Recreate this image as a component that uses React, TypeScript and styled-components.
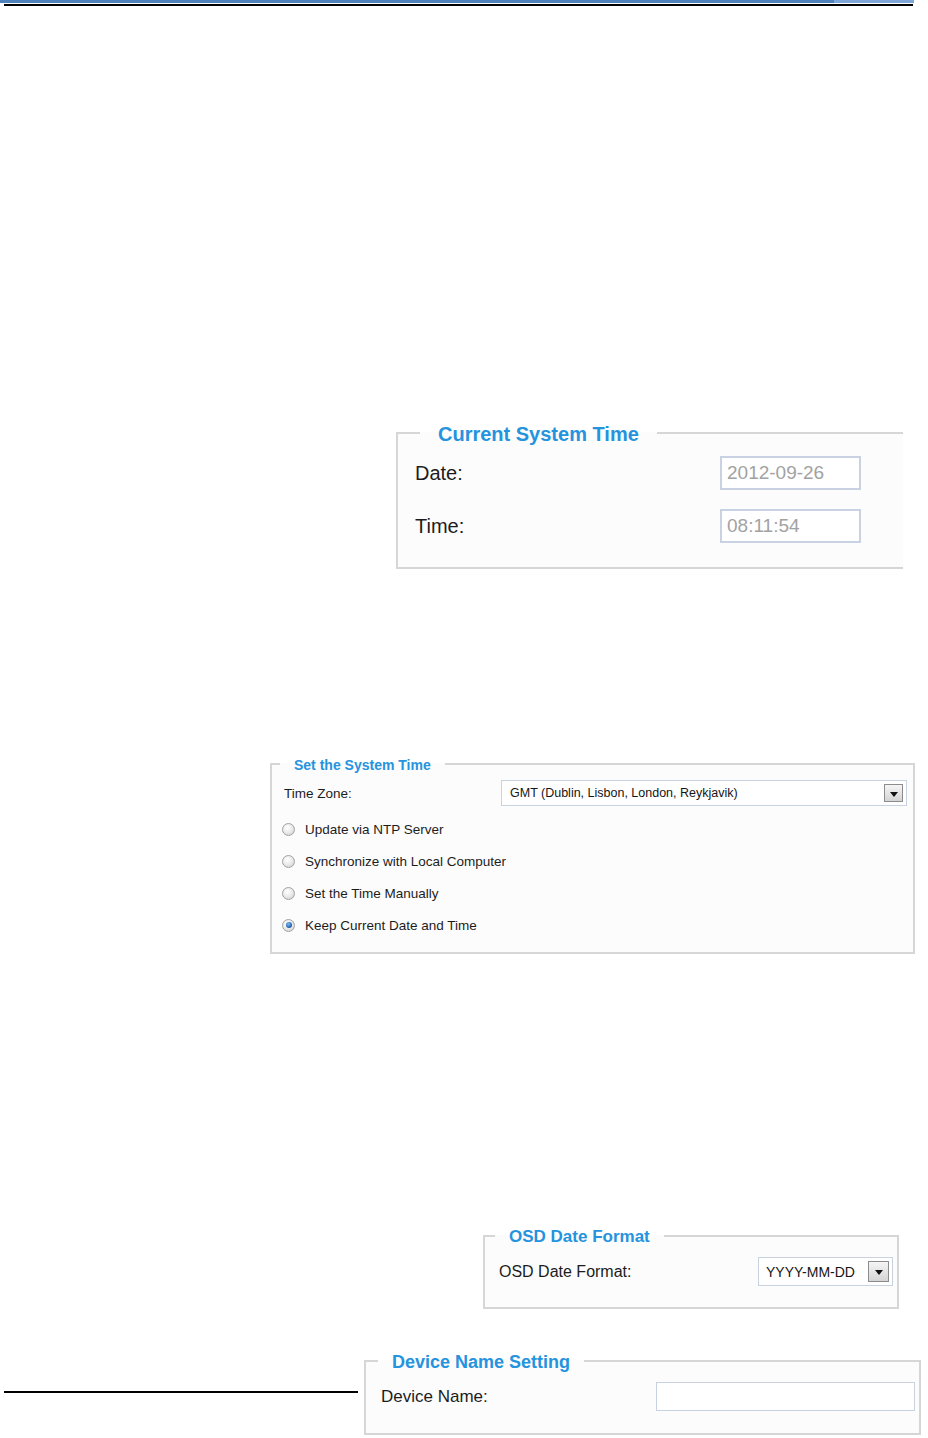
import styled, { createGlobalStyle } from "styled-components";

const GlobalStyle = createGlobalStyle`
  html, body {
    margin: 0;
    padding: 0;
    background: #ffffff;
  }
  body {
    font-family: "Liberation Sans", Arial, sans-serif;
    color: #1c1c1c;
  }
`;

const Page = styled.div`
  width: 928px;
  min-height: 1438px;
  overflow: hidden;
`;

const BlueBand = styled.div`
  height: 3px;
  margin-right: 14px;
  background: linear-gradient(to right, #4f81bd 0 91.3%, #7fa6d8 91.3% 100%);
`;

const HeaderRule = styled.div`
  height: 2px;
  margin: 1px 15px 0 4px;
  background: #000000;
`;

const Section = styled.div<{ $left: number; $top: number; $width: number }>`
  margin-left: ${(p) => p.$left}px;
  margin-top: ${(p) => p.$top}px;
  width: ${(p) => p.$width}px;
`;

const FootRow = styled.div<{ $top: number }>`
  display: flex;
  align-items: flex-start;
  gap: 6px;
  margin-top: ${(p) => p.$top}px;
  padding-left: 4px;
`;

const FootRule = styled.div`
  width: 354px;
  height: 1.5px;
  margin-top: 41px;
  background: #000000;
`;

const Box = styled.fieldset<{ $open?: boolean; $width?: number }>`
  margin: 0;
  padding: 0;
  min-width: 0;
  width: ${(p) => (p.$width ? `${p.$width}px` : "auto")};
  box-sizing: border-box;
  border: 2px solid #d6d6d6;
  ${(p) => (p.$open ? "border-right: none;" : "")}
  background: #fcfcfd;
`;

const Legend = styled.legend<{ $size: number; $lh: number; $offset: number; $pad: number }>`
  margin-left: ${(p) => p.$offset}px;
  padding: 2px ${(p) => p.$pad}px 0;
  font-size: ${(p) => p.$size}px;
  line-height: ${(p) => p.$lh - 2}px;
  font-weight: 700;
  color: #2593dd;
  white-space: nowrap;
`;

const Body = styled.div<{ $pad: string; $gap?: number }>`
  display: flex;
  flex-direction: column;
  gap: ${(p) => p.$gap ?? 0}px;
  padding: ${(p) => p.$pad};
`;

const FieldRow = styled.div<{ $height: number }>`
  display: flex;
  align-items: center;
  justify-content: space-between;
  height: ${(p) => p.$height}px;
`;

const Label = styled.span<{ $size: number }>`
  font-size: ${(p) => p.$size}px;
  color: #1c1c1c;
  white-space: nowrap;
`;

const TextBox = styled.div<{ $width: number; $height: number; $size: number; $border: number }>`
  display: flex;
  align-items: center;
  box-sizing: border-box;
  width: ${(p) => p.$width}px;
  height: ${(p) => p.$height}px;
  padding-left: 5px;
  border: ${(p) => p.$border}px solid #c8d2e2;
  background: #ffffff;
  font-size: ${(p) => p.$size}px;
  color: #a2a2a2;
`;

const Select = styled.div<{ $width: number; $height: number; $size: number; $padLeft: number }>`
  display: flex;
  align-items: center;
  justify-content: space-between;
  box-sizing: border-box;
  width: ${(p) => p.$width}px;
  height: ${(p) => p.$height}px;
  padding: 0 3px 0 ${(p) => p.$padLeft}px;
  border: 1px solid #c9d2df;
  background: #ffffff;
  font-size: ${(p) => p.$size}px;
  color: #151515;
  white-space: nowrap;
`;

const DropButton = styled.span<{ $w: number; $h: number }>`
  display: grid;
  place-items: center;
  box-sizing: border-box;
  width: ${(p) => p.$w}px;
  height: ${(p) => p.$h}px;
  border: 1px solid #8c8c8c;
  background: linear-gradient(#f5f5f5, #d4d4d4);

  &::after {
    content: "";
    margin-top: 2px;
    border-left: 4px solid transparent;
    border-right: 4px solid transparent;
    border-top: 5px solid #111111;
  }
`;

const RadioRow = styled.div`
  display: flex;
  align-items: center;
  gap: 10px;
  height: 20px;
  font-size: 13.5px;
  color: #1c1c1c;
`;

const Radio = styled.span<{ $checked?: boolean }>`
  display: grid;
  place-items: center;
  box-sizing: border-box;
  width: 13px;
  height: 13px;
  margin-left: -2px;
  border-radius: 50%;
  border: 1px solid #a3a3a3;
  background: radial-gradient(circle at 40% 35%, #ffffff 0, #ececec 45%, #c9c9c9 100%);

  &::after {
    content: "";
    display: ${(p) => (p.$checked ? "block" : "none")};
    width: 6px;
    height: 6px;
    border-radius: 50%;
    background: radial-gradient(circle at 40% 35%, #7cbcf5 0, #1d5aa8 70%, #173f7a 100%);
  }
`;

const RadioList = styled.div`
  display: flex;
  flex-direction: column;
  gap: 12px;
  margin-top: 13px;
`;

const timeOptions = [
  { label: "Update via NTP Server", checked: false },
  { label: "Synchronize with Local Computer", checked: false },
  { label: "Set the Time Manually", checked: false },
  { label: "Keep Current Date and Time", checked: true },
];

const App = () => (
  <Page>
    <GlobalStyle />
    <BlueBand />
    <HeaderRule />

    <Section $left={396} $top={415} $width={507}>
      <Box $open>
        <Legend $size={20} $lh={24} $offset={22} $pad={18}>
          Current System Time
        </Legend>
        <Body $pad="11px 42px 24px 17px" $gap={19}>
          <FieldRow $height={34}>
            <Label $size={20}>Date:</Label>
            <TextBox $width={141} $height={34} $size={19} $border={2}>
              2012-09-26
            </TextBox>
          </FieldRow>
          <FieldRow $height={34}>
            <Label $size={20}>Time:</Label>
            <TextBox $width={141} $height={34} $size={19} $border={2}>
              08:11:54
            </TextBox>
          </FieldRow>
        </Body>
      </Box>
    </Section>

    <Section $left={270} $top={186} $width={645}>
      <Box>
        <Legend $size={14} $lh={18} $offset={8} $pad={14}>
          Set the System Time
        </Legend>
        <Body $pad="7px 6px 17px 12px">
          <FieldRow $height={26}>
            <Label $size={13.5}>Time Zone:</Label>
            <Select $width={406} $height={26} $size={12.5} $padLeft={8}>
              GMT (Dublin, Lisbon, London, Reykjavik)
              <DropButton $w={19} $h={18} />
            </Select>
          </FieldRow>
          <RadioList>
            {timeOptions.map((opt) => (
              <RadioRow key={opt.label}>
                <Radio $checked={opt.checked} />
                {opt.label}
              </RadioRow>
            ))}
          </RadioList>
        </Body>
      </Box>
    </Section>

    <Section $left={483} $top={272} $width={416}>
      <Box>
        <Legend $size={17} $lh={20} $offset={10} $pad={14}>
          OSD Date Format
        </Legend>
        <Body $pad="11px 4px 21px 14px">
          <FieldRow $height={29}>
            <Label $size={16}>OSD Date Format:</Label>
            <Select $width={135} $height={29} $size={14} $padLeft={7}>
              YYYY-MM-DD
              <DropButton $w={21} $h={21} />
            </Select>
          </FieldRow>
        </Body>
      </Box>
    </Section>

    <FootRow $top={41}>
      <FootRule />
      <Box $width={557}>
        <Legend $size={18} $lh={22} $offset={12} $pad={14}>
          Device Name Setting
        </Legend>
        <Body $pad="10px 4px 22px 15px">
          <FieldRow $height={29}>
            <Label $size={17}>Device Name:</Label>
            <TextBox $width={259} $height={29} $size={15} $border={1} />
          </FieldRow>
        </Body>
      </Box>
    </FootRow>
  </Page>
);

export default App;
